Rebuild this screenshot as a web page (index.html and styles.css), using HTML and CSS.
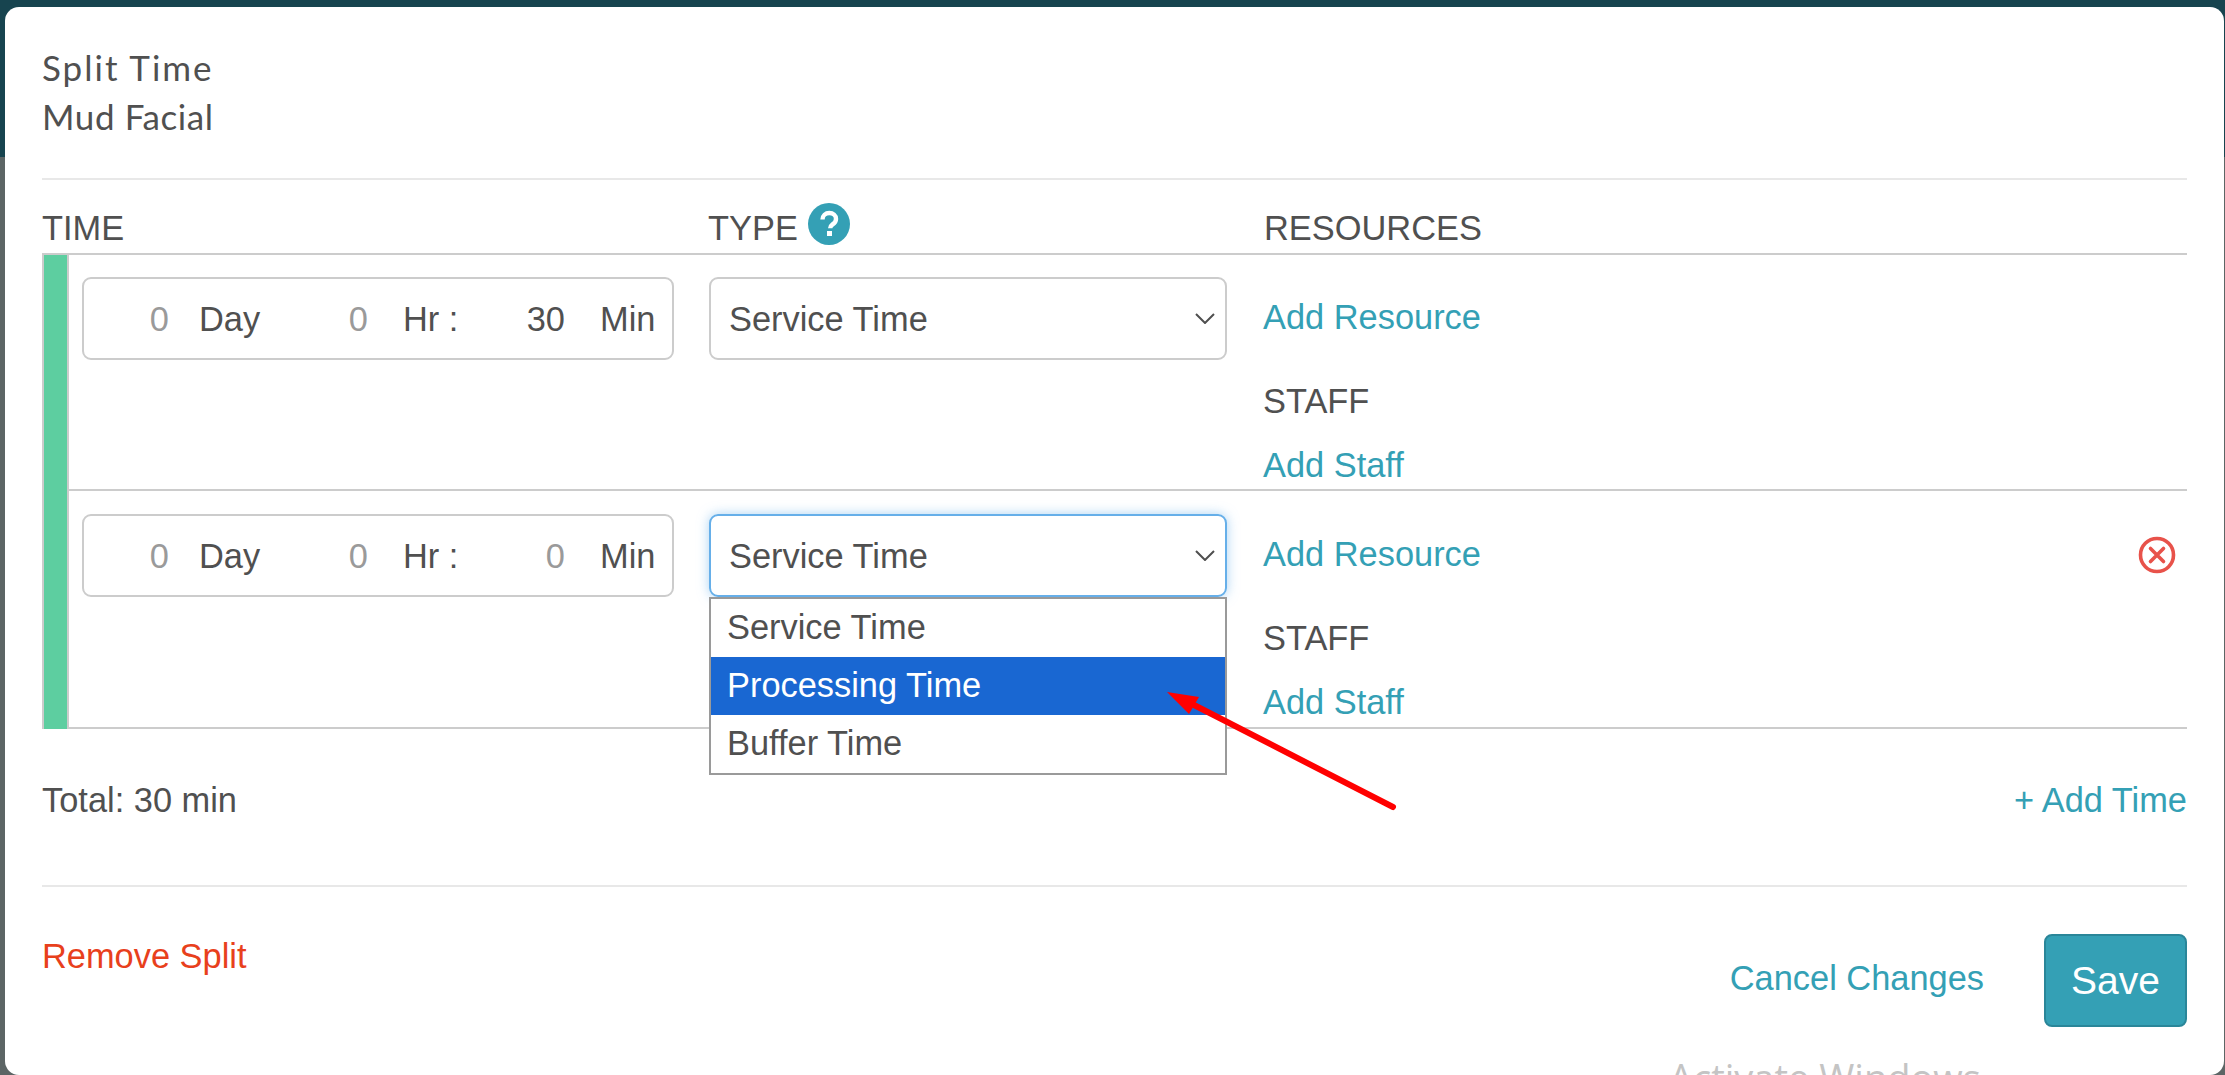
FILE: index.html
```html
<!DOCTYPE html>
<html lang="en">
<head>
<meta charset="utf-8">
<title>Split Time</title>
<link rel="stylesheet" href="styles.css">
</head>
<body>
<div class="backdrop-top"></div>
<main class="modal">
  <header class="modal-title">
    <div>Split Time</div>
    <div class="modal-sub">Mud Facial</div>
  </header>
  <hr class="rule">
  <div class="head">
    <div>TIME</div>
    <div class="head-type">TYPE
      <svg class="help" viewBox="0 0 42 42" aria-hidden="true"><circle cx="21" cy="21" r="21" fill="#34a0b5"/><path d="M14.5 16.5c0-4 3-6.5 6.8-6.5s6.7 2.3 6.7 5.9c0 2.8-1.6 4.2-3.4 5.5-1.6 1.2-2.4 1.9-2.4 3.9" fill="none" stroke="#fff" stroke-width="4.4"/><rect x="19" y="28" width="5" height="5" fill="#fff"/></svg>
    </div>
    <div>RESOURCES</div>
  </div>
  <section class="table">
    <div class="bar"></div>
    <div class="rows">
      <div class="row row-first">
        <div class="duration">
          <span class="num muted">0</span><span class="unit unit-a">Day</span>
          <span class="num muted">0</span><span class="unit unit-b">Hr :</span>
          <span class="num">30</span><span class="unit unit-b">Min</span>
        </div>
        <div class="select">
          <span>Service Time</span>
          <svg class="chev" viewBox="0 0 20 11" aria-hidden="true"><path d="M1 1l9 9 9-9" fill="none" stroke="#4f4f4f" stroke-width="2"/></svg>
        </div>
        <div class="res">
          <a class="res-add">Add Resource</a>
          <div class="res-staff">STAFF</div>
          <a class="res-link">Add Staff</a>
        </div>
      </div>
      <div class="row">
        <div class="duration">
          <span class="num muted">0</span><span class="unit unit-a">Day</span>
          <span class="num muted">0</span><span class="unit unit-b">Hr :</span>
          <span class="num muted">0</span><span class="unit unit-b">Min</span>
        </div>
        <div class="select select-open">
          <span>Service Time</span>
          <svg class="chev" viewBox="0 0 20 11" aria-hidden="true"><path d="M1 1l9 9 9-9" fill="none" stroke="#4f4f4f" stroke-width="2"/></svg>
          <ul class="menu">
            <li>Service Time</li>
            <li class="active">Processing Time</li>
            <li>Buffer Time</li>
          </ul>
        </div>
        <div class="res">
          <a class="res-add">Add Resource</a>
          <div class="res-staff">STAFF</div>
          <a class="res-link">Add Staff</a>
        </div>
        <svg class="remove" viewBox="0 0 38 38" aria-hidden="true"><circle cx="19" cy="19" r="16.5" fill="none" stroke="#e8524a" stroke-width="3.6"/><path d="M12.5 12.5l13 13M25.5 12.5l-13 13" fill="none" stroke="#e8524a" stroke-width="3.6" stroke-linecap="round"/></svg>
      </div>
    </div>
  </section>
  <div class="total">
    <div>Total: 30 min</div>
    <a class="link">+ Add Time</a>
  </div>
  <hr class="rule rule-foot">
  <footer class="foot">
    <a class="remove-split">Remove Split</a>
    <div class="actions">
      <a class="link cancel">Cancel Changes</a>
      <button class="save" type="button">Save</button>
    </div>
  </footer>
</main>
<div class="watermark">Activate Windows</div>
<svg class="annot" viewBox="0 0 2225 1075" aria-hidden="true">
  <path d="M1393 807L1194 705" fill="none" stroke="#f00" stroke-width="6" stroke-linecap="round"/>
  <polygon points="1167,692 1199,697 1189,714" fill="#f00"/>
</svg>
</body>
</html>
```
FILE: styles.css
```css
* { box-sizing: border-box; }
html, body { margin: 0; height: 1075px; overflow: hidden; }
body {
  position: relative;
  background: #5c6565;
  color: #505050;
  font-family: "Liberation Sans", Arial, sans-serif;
  font-size: 34.4px;
  line-height: 40px;
}
.backdrop-top {
  position: absolute;
  left: 0; right: 0; top: 0;
  height: 157px;
  background: #17444f;
}
.modal {
  position: relative;
  margin: 7px 1px 0 5px;
  height: 1068px;
  padding: 36px 37px 0;
  background: #fff;
  border-radius: 14px;
}
.modal-title {
  font-family: Lato, "Open Sans", sans-serif;
  font-size: 35px;
  line-height: 49px;
  letter-spacing: 2px;
}
.modal-sub { letter-spacing: 0.6px; }
.rule {
  margin: 37px 0 0;
  height: 2px;
  border: 0;
  background: #e8e8e8;
}
.head {
  display: grid;
  grid-template-columns: 666px 556px 1fr;
  padding-top: 24px;
  height: 73px;
  line-height: 48px;
}
.head-type { position: relative; }
.help {
  position: absolute;
  left: 100px;
  top: -1px;
  width: 42px;
  height: 42px;
}
.table {
  display: flex;
  border-top: 2px solid #ccc;
}
.bar {
  width: 27px;
  background: #5dcea0;
  border-left: 2px solid #ccc;
  border-right: 2px solid #ccc;
}
.rows { flex: 1; }
.row {
  position: relative;
  display: grid;
  grid-template-columns: 592px 518px 1fr;
  column-gap: 35px;
  align-items: start;
  padding: 23px 0 0 13px;
  height: 238px;
  border-bottom: 2px solid #ccc;
}
.row-first { padding-top: 22px; height: 236px; }
.duration {
  display: grid;
  grid-template-columns: 85px 93px 106px 90px 107px 91px;
  align-items: center;
  height: 83px;
  border: 2px solid #ccc;
  border-radius: 9px;
  white-space: nowrap;
}
.num { text-align: right; }
.muted { color: #9a9a9a; }
.unit-a { padding-left: 30px; }
.unit-b { padding-left: 35px; }
.select {
  position: relative;
  display: flex;
  align-items: center;
  justify-content: space-between;
  height: 83px;
  padding: 0 10px 0 18px;
  border: 2px solid #ccc;
  border-radius: 9px;
}
.select-open {
  border-color: #66afe9;
  box-shadow: 0 0 12px rgba(102, 175, 233, .55);
}
.chev { width: 20px; height: 11px; }
.menu {
  position: absolute;
  z-index: 2;
  left: -2px;
  right: -2px;
  top: 81px;
  margin: 0;
  padding: 0;
  list-style: none;
  background: #fff;
  border: 2px solid #9a9a9a;
}
.menu li {
  height: 58px;
  line-height: 56px;
  padding-left: 16px;
}
.menu .active { background: #1967d2; color: #fff; }
.res { padding-left: 1px; color: #505050; }
.res-add {
  display: block;
  height: 83px;
  line-height: 81px;
  color: #34a0b5;
}
.res-staff { margin-top: 21px; }
.res-link { display: block; margin-top: 24px; color: #34a0b5; }
.remove {
  position: absolute;
  right: 11px;
  top: 45px;
  width: 38px;
  height: 38px;
}
.total {
  display: flex;
  justify-content: space-between;
  margin-top: 51px;
}
.link { color: #34a0b5; }
.rule-foot { margin-top: 65px; }
.foot {
  display: flex;
  justify-content: space-between;
  align-items: flex-start;
  padding-top: 47px;
}
.remove-split { margin-top: 2px; color: #e8401c; }
.actions {
  display: flex;
  align-items: flex-start;
  gap: 60px;
}
.cancel { margin-top: 24px; }
.save {
  width: 143px;
  height: 93px;
  padding: 0;
  font: inherit;
  font-size: 39px;
  color: #fff;
  background: #34a0b5;
  border: 2px solid #2a8699;
  border-radius: 8px;
}
.watermark {
  position: absolute;
  left: 1669px;
  top: 1052px;
  font-family: "Open Sans", sans-serif;
  font-size: 38px;
  line-height: 50px;
  color: #c4c4c4;
  white-space: nowrap;
}
.annot {
  position: absolute;
  left: 0;
  top: 0;
  width: 2225px;
  height: 1075px;
  z-index: 5;
  pointer-events: none;
}
```
